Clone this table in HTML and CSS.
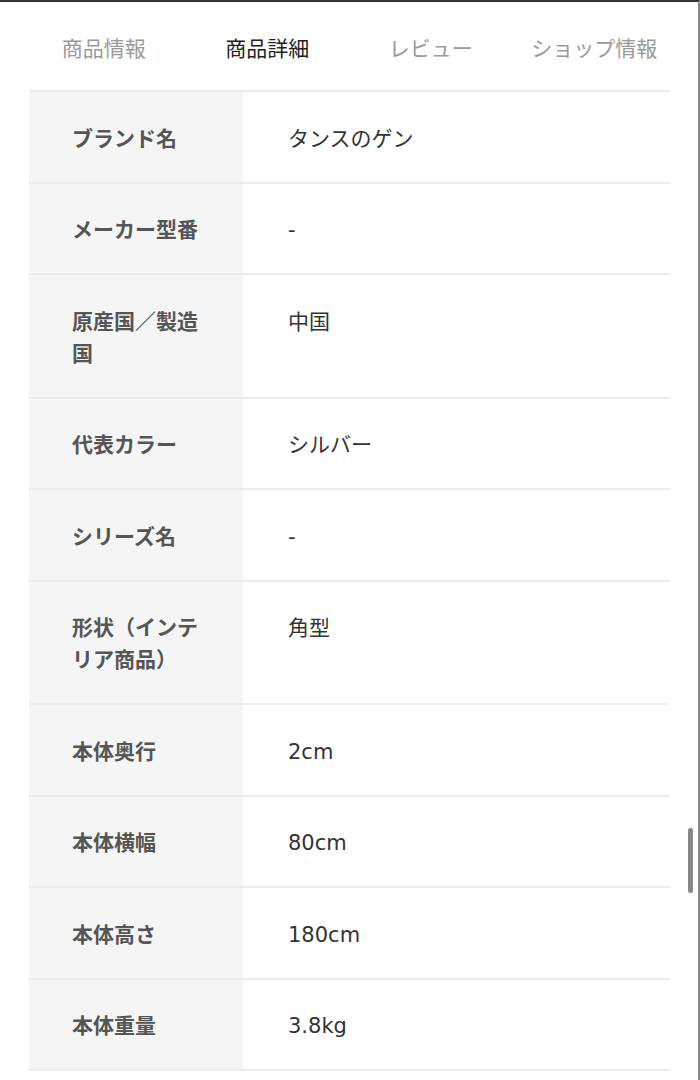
FILE: index.html
```html
<!DOCTYPE html>
<html>
<head>
  <title>商品詳細</title>
  <link rel="stylesheet" href="styles.css">
</head>
<body>
  <div class="screen">
    <div class="tabs">
      <div class="tab">商品情報</div>
      <div class="tab active">商品詳細</div>
      <div class="tab">レビュー</div>
      <div class="tab">ショップ情報</div>
    </div>

    <table class="spec-table">
      <tr><th>ブランド名</th><td>タンスのゲン</td></tr>
      <tr><th>メーカー型番</th><td>-</td></tr>
      <tr><th>原産国／製造国</th><td>中国</td></tr>
      <tr><th>代表カラー</th><td>シルバー</td></tr>
      <tr><th>シリーズ名</th><td>-</td></tr>
      <tr><th>形状（インテリア商品）</th><td>角型</td></tr>
      <tr><th>本体奥行</th><td>2cm</td></tr>
      <tr><th>本体横幅</th><td>80cm</td></tr>
      <tr><th>本体高さ</th><td>180cm</td></tr>
      <tr><th>本体重量</th><td>3.8kg</td></tr>
    </table>

    <div class="scroll-thumb"></div>
  </div>
</body>
</html>
```

FILE: styles.css
```css
body {
  margin: 0;
  padding: 0;
  background-color: #FFFFFF;
  font-family: "Noto Sans CJK JP", "Noto Sans", sans-serif;
}

.screen {
  position: relative;
  height: 1078px;
  border-top: 2px solid #333333;
  border-right: 2px solid #8a8a8a;
  overflow: hidden;
}

.tabs {
  display: flex;
  height: 88px;
  padding: 0 22px;
}

.tab {
  flex: 1;
  display: flex;
  align-items: center;
  justify-content: center;
  font-size: 21px;
  color: #9a9a9a;
  padding-top: 2px;
}

.tab.active {
  color: #222222;
}

.spec-table {
  width: 641px;
  margin-left: 29px;
  border-collapse: collapse;
  border-top: 2px solid #ececec;
}

.spec-table tr {
  border-bottom: 2px solid #ececec;
}

.spec-table th,
.spec-table td {
  font-size: 21px;
  line-height: 32px;
  text-align: left;
  vertical-align: top;
}

.spec-table th {
  width: 141px;
  padding: 28.5px 30px 29px 43px;
  background-color: #f5f5f5;
  color: #555555;
  font-weight: 700;
}

.spec-table td {
  padding: 30.5px 0 27px 45px;
  color: #333333;
  font-family: "DejaVu Sans", "Noto Sans CJK JP", sans-serif;
  font-weight: 400;
}

.scroll-thumb {
  position: absolute;
  top: 826px;
  right: 5px;
  width: 5px;
  height: 65px;
  border-radius: 3px;
  background-color: #888888;
}
```
